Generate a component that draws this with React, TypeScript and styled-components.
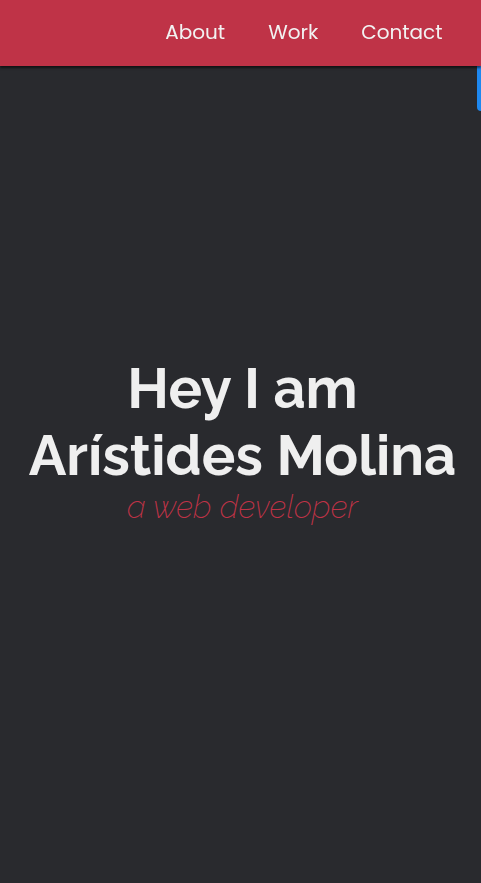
import React from "react";
import styled, { createGlobalStyle } from "styled-components";

const Global = createGlobalStyle`
  html, body { margin: 0; padding: 0; background: #292a2e; }
  body { font-family: "Raleway", "Lato", sans-serif; overflow: hidden; }
  * { box-sizing: border-box; }
`;

const Nav = styled.nav`
  position: fixed;
  top: 0;
  left: 0;
  right: 0;
  height: 66px;
  background: #bf3347;
  box-shadow: 0 2px 2px rgba(0, 0, 0, 0.55);
  display: flex;
  justify-content: flex-end;
  align-items: center;
  padding-right: 17px;
  padding-bottom: 2px;
  z-index: 2;
`;

const NavLink = styled.a`
  font-family: "Poppins", "Inter", "Open Sans", sans-serif;
  font-size: 20px;
  font-weight: 400;
  color: #f2f2f2;
  text-decoration: none;
  padding: 0 21.5px;
`;

const Hero = styled.section`
  height: 883px;
  display: flex;
  flex-direction: column;
  align-items: center;
  justify-content: center;
  text-align: center;
  padding-left: 4px;
  padding-bottom: 4px;
`;

const Title = styled.h1`
  margin: 0;
  font-family: "Raleway", "Lato", sans-serif;
  font-weight: 700;
  font-size: 56px;
  line-height: 67px;
  color: #efefef;
`;

const Subtitle = styled.p`
  margin: 0;
  font-family: "Raleway", "Lato", sans-serif;
  font-weight: 200;
  font-style: italic;
  font-size: 32px;
  line-height: 36px;
  color: #bf3347;
`;

const SideTab = styled.div`
  position: fixed;
  right: -8px;
  top: 62px;
  width: 12px;
  height: 49px;
  border-radius: 4px;
  background: #1e88f0;
  z-index: 1;
`;

export default function App() {
  return (
    <>
      <Global />
      <Nav>
        <NavLink href="#about">About</NavLink>
        <NavLink href="#work">Work</NavLink>
        <NavLink href="#contact">Contact</NavLink>
      </Nav>
      <SideTab />
      <Hero>
        <Title>
          Hey I am
          <br />
          Arístides Molina
        </Title>
        <Subtitle>a web developer</Subtitle>
      </Hero>
    </>
  );
}
